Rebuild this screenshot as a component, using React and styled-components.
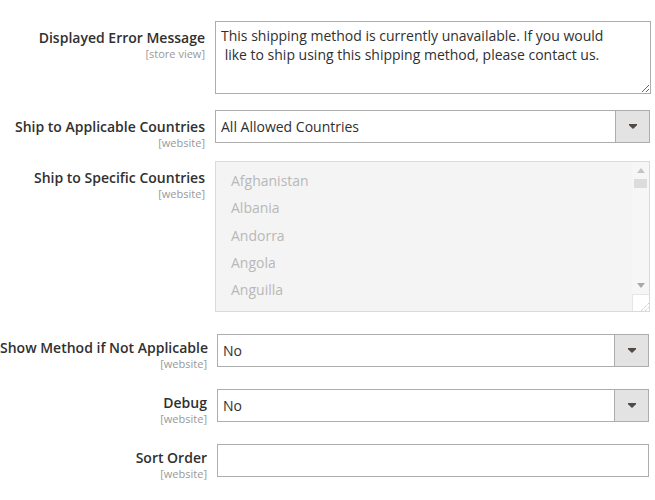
import React from "react";
import styled, { createGlobalStyle } from "styled-components";

const Global = createGlobalStyle`
  html, body { margin: 0; padding: 0; background: #ffffff; }
  body { font-family: "Open Sans", "Noto Sans", sans-serif; color: #303030; }
  * { box-sizing: border-box; }
`;

const Form = styled.div`
  width: 655px;
  padding-top: 21px;
  display: flex;
  flex-direction: column;
`;

const Row = styled.div`
  display: grid;
  grid-template-columns: ${(p) => p.$labelW}px ${(p) => p.$controlW}px;
  column-gap: 10px;
  align-items: start;
  height: ${(p) => (p.$h ? `${p.$h}px` : "auto")};
`;

const LabelCell = styled.div`
  text-align: right;
  padding-top: ${(p) => p.$pt}px;
  white-space: nowrap;
`;

const LabelText = styled.div`
  font-size: 14px;
  font-weight: 600;
  line-height: 19px;
  color: #303030;
`;

const Scope = styled.div`
  font-size: 11px;
  line-height: 14px;
  color: #999999;
`;

const TextArea = styled.textarea`
  display: block;
  width: ${(p) => p.$w}px;
  height: 73px;
  margin: 0;
  border: 1px solid #adadad;
  border-radius: 0;
  padding: 4px 5px;
  font-family: "Open Sans", "Noto Sans", sans-serif;
  font-size: 14px;
  line-height: 19px;
  color: #303030;
  resize: vertical;
  outline: none;
  overflow: hidden;
  background: #ffffff;
`;

const SelectBox = styled.div`
  display: flex;
  height: 33px;
  border: 1px solid #adadad;
  background: #ffffff;
`;

const SelectValue = styled.div`
  flex: 1;
  display: flex;
  align-items: center;
  padding-left: 5px;
  font-size: 14px;
  color: #303030;
`;

const ArrowButton = styled.div`
  width: 34px;
  display: flex;
  align-items: center;
  justify-content: center;
  background: #e3e3e3;
  border-left: 1px solid #adadad;
`;

const TextInput = styled.div`
  height: 33px;
  border: 1px solid #adadad;
  background: #ffffff;
`;

const MultiBox = styled.div`
  display: flex;
  height: 151px;
  border: 1px solid #dadada;
  background: #f4f4f4;
`;

const OptionList = styled.div`
  flex: 1;
  padding-top: 5px;
  padding-left: 15px;
  overflow: hidden;
`;

const Option = styled.div`
  height: 27.25px;
  display: flex;
  align-items: center;
  font-size: 14px;
  color: #b8b8b8;
`;

const ScrollBar = styled.div`
  width: 17px;
  display: flex;
  flex-direction: column;
  background: #f6f6f6;
`;

const ScrollArrow = styled.div`
  height: 17px;
  display: flex;
  align-items: center;
  justify-content: center;
`;

const Thumb = styled.div`
  height: 9px;
  margin: 0 2px;
  background: #dcdcdc;
`;

const Spacer = styled.div`
  flex: 1;
`;

const Corner = styled.div`
  height: 17px;
  background: #ffffff;
  border-top: 1px solid #e6e6e6;
  border-left: 1px solid #e6e6e6;
  display: flex;
  align-items: flex-end;
  justify-content: flex-end;
`;

const Caret = () => (
  <svg width="8" height="5" viewBox="0 0 8 5">
    <polygon points="0,0 8,0 8,1.2 4,5 0,1.2" fill="#514943" />
  </svg>
);

const Select = ({ value }) => (
  <SelectBox>
    <SelectValue>{value}</SelectValue>
    <ArrowButton>
      <Caret />
    </ArrowButton>
  </SelectBox>
);

const Field = ({ label, scope, pt, children }) => (
  <>
    <LabelCell $pt={pt}>
      <LabelText>{label}</LabelText>
      <Scope>[{scope}]</Scope>
    </LabelCell>
    <div>{children}</div>
  </>
);

const countries = ["Afghanistan", "Albania", "Andorra", "Angola", "Anguilla"];

export default function App() {
  return (
    <>
      <Global />
      <Form>
        <Row $labelW={205} $controlW={436} $h={89}>
          <Field label="Displayed Error Message" scope="store view" pt={7}>
            <TextArea
              $w={436}
              defaultValue={
                "This shipping method is currently unavailable. If you would\n like to ship using this shipping method, please contact us."
              }
            />
          </Field>
        </Row>
        <Row $labelW={205} $controlW={435} $h={51}>
          <Field label="Ship to Applicable Countries" scope="website" pt={7}>
            <Select value="All Allowed Countries" />
          </Field>
        </Row>
        <Row $labelW={205} $controlW={435} $h={173}>
          <Field label="Ship to Specific Countries" scope="website" pt={7}>
            <MultiBox>
              <OptionList>
                {countries.map((c) => (
                  <Option key={c}>{c}</Option>
                ))}
              </OptionList>
              <ScrollBar>
                <ScrollArrow>
                  <svg width="8" height="5" viewBox="0 0 8 5">
                    <polygon points="4,0 8,5 0,5" fill="#c4c4c4" />
                  </svg>
                </ScrollArrow>
                <Thumb />
                <Spacer />
                <ScrollArrow>
                  <svg width="8" height="5" viewBox="0 0 8 5">
                    <polygon points="0,0 8,0 4,5" fill="#a8a8a8" />
                  </svg>
                </ScrollArrow>
                <Corner>
                  <svg width="10" height="10" viewBox="0 0 10 10">
                    <line x1="2" y1="10" x2="10" y2="2" stroke="#b5b5b5" strokeWidth="1" strokeDasharray="1 1" />
                    <line x1="6" y1="10" x2="10" y2="6" stroke="#b5b5b5" strokeWidth="1" strokeDasharray="1 1" />
                  </svg>
                </Corner>
              </ScrollBar>
            </MultiBox>
          </Field>
        </Row>
        <Row $labelW={207} $controlW={432} $h={55}>
          <Field label="Show Method if Not Applicable" scope="website" pt={4}>
            <Select value="No" />
          </Field>
        </Row>
        <Row $labelW={207} $controlW={432} $h={55}>
          <Field label="Debug" scope="website" pt={4}>
            <Select value="No" />
          </Field>
        </Row>
        <Row $labelW={207} $controlW={432}>
          <Field label="Sort Order" scope="website" pt={4}>
            <TextInput />
          </Field>
        </Row>
      </Form>
    </>
  );
}
